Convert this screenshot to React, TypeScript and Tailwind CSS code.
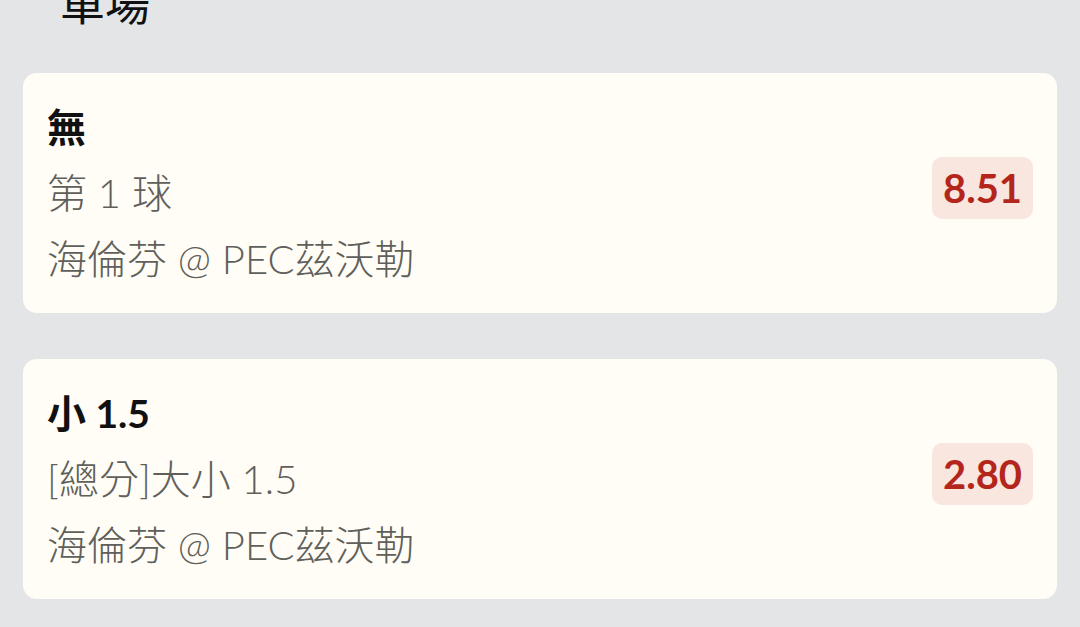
import React from "react";

const font = { fontFamily: '"Lato", "Noto Sans CJK TC", sans-serif' };

function Card({ title, sub, match, odds }: { title: string; sub: string; match: string; odds: string }) {
  return (
    <div className="h-[240px] rounded-[14px] bg-[#fffdf5] pl-[24px] pr-[24px] flex items-center justify-between">
      <div className="flex flex-col">
        <div className="text-[39px] leading-[66px] font-bold text-[#111111]">{title}</div>
        <div className="text-[40px] leading-[66px] font-light text-[#5f5f5b]">{sub}</div>
        <div className="text-[40px] leading-[66px] font-light text-[#5f5f5b]">{match}</div>
      </div>
      <div className="mb-[11px] h-[62px] w-[101px] rounded-[10px] bg-[#f8e6df] flex items-center justify-center text-[40px] font-bold text-[#b4261b]">
        {odds}
      </div>
    </div>
  );
}

export default function App() {
  return (
    <div style={font} className="w-[1080px] h-[627px] overflow-hidden bg-[#e4e5e7] px-[23px]">
      <div className="h-[73px] relative">
        <div className="absolute left-[37px] top-[-18px] text-[45px] leading-none text-[#111111]">單場</div>
      </div>
      <div className="flex flex-col gap-[46px]">
        <Card title="無" sub="第 1 球" match="海倫芬 @ PEC茲沃勒" odds="8.51" />
        <Card title="小 1.5" sub="[總分]大小 1.5" match="海倫芬 @ PEC茲沃勒" odds="2.80" />
      </div>
    </div>
  );
}
